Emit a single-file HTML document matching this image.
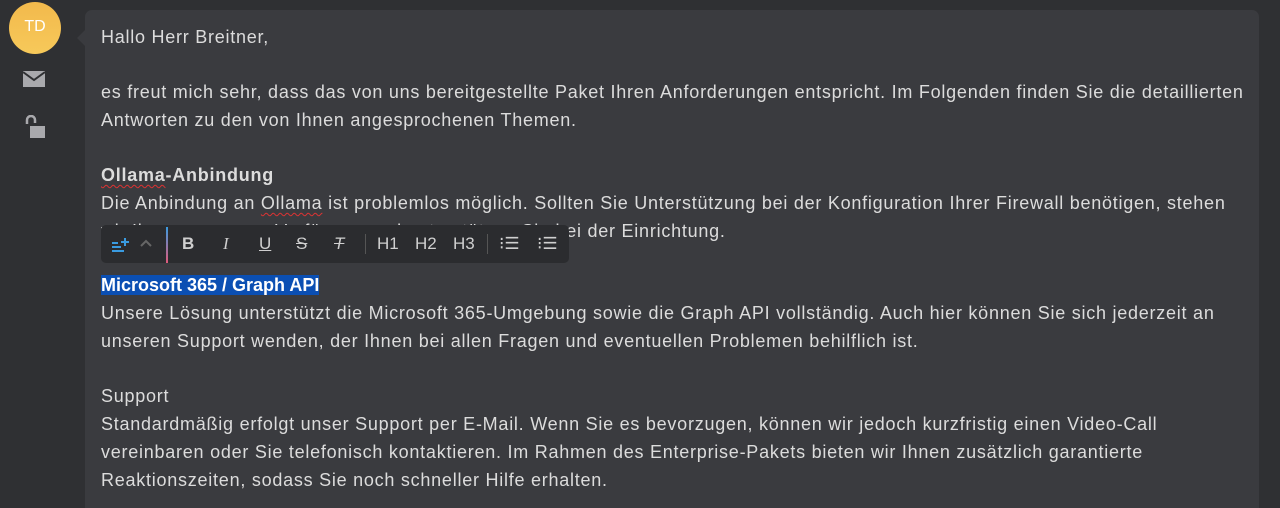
<!DOCTYPE html>
<html><head><meta charset="utf-8"><style>
html,body{margin:0;width:1280px;height:508px;overflow:hidden;}
body{background:#2f3033;position:relative;font-family:"Liberation Sans",sans-serif;}
.av{position:absolute;left:9px;top:2px;width:52px;height:52px;border-radius:50%;background:linear-gradient(#f2b94c,#f7c95a);color:#fff;font-size:16px;text-align:center;line-height:50px;}
.card{position:absolute;left:85px;top:10px;width:1174px;height:520px;background:#3a3b3f;border-radius:7px;}
.tri{position:absolute;left:77px;top:30px;width:0;height:0;border:8px solid transparent;border-right-color:#3a3b3f;border-left:0;}
.l{position:absolute;left:101px;color:#dcdcdc;font-size:18px;white-space:nowrap;line-height:28px;letter-spacing:0.75px}
b{font-weight:bold}
.sq{text-decoration:underline wavy #d33;text-decoration-thickness:1px;text-underline-offset:3px}
.tb{position:absolute;left:101px;top:225px;width:468px;height:38px;background:#2b2c2f;border-radius:5px;color:#cfcfcf;font-size:17px;}
.tb span{position:absolute;top:9px}
.sel{background:#0b4fb3;color:#fff}
</style></head><body>
<div class="av">TD</div>
<svg style="position:absolute;left:22px;top:70px" width="24" height="18"><rect x="1" y="1" width="22" height="16" fill="#a9a9ad"/><path d="M1 2 L12 10 L23 2" stroke="#2f3033" stroke-width="2" fill="none"/></svg>
<svg style="position:absolute;left:24px;top:115px" width="24" height="24"><path d="M3 9 V5 a4 4 0 0 1 8 0 V8" stroke="#a9a9ad" stroke-width="2.5" fill="none"/><rect x="6" y="11" width="15" height="12" fill="#a9a9ad"/></svg>
<div class="tri"></div>
<div class="card"></div>
<div class="l" style="top:23px">Hallo Herr Breitner,</div>
<div class="l" style="top:78px">es freut mich sehr, dass das von uns bereitgestellte Paket Ihren Anforderungen entspricht. Im Folgenden finden Sie die detaillierten</div>
<div class="l" style="top:106px">Antworten zu den von Ihnen angesprochenen Themen.</div>
<div class="l" style="top:161px"><b><span class="sq">Ollama</span>-Anbindung</b></div>
<div class="l" style="top:189px">Die Anbindung an <span class="sq">Ollama</span> ist problemlos möglich. Sollten Sie Unterstützung bei der Konfiguration Ihrer Firewall benötigen, stehen</div>
<div class="l" style="top:217px">wir Ihnen gerne zur Verfügung und unterstützen Sie bei der Einrichtung.</div>
<div class="tb">
<svg style="position:absolute;left:10px;top:9px" width="22" height="20"><path d="M1 17h12M1 13h9M1 9h6" stroke="#3a9be0" stroke-width="2"/><path d="M14 4v8M10 8h8" stroke="#3a9be0" stroke-width="2"/></svg>
<svg style="position:absolute;left:38px;top:12px" width="14" height="12"><path d="M2 9l5-5 5 5" stroke="#666" stroke-width="2" fill="none"/></svg>
<div style="position:absolute;left:65px;top:2px;width:2px;height:36px;background:linear-gradient(#3a9be0,#e05a7a)"></div>
<span style="left:81px;font-weight:bold">B</span><span style="left:122px;font-style:italic;font-family:'Liberation Serif',serif">I</span><span style="left:158px;text-decoration:underline">U</span><span style="left:195px;text-decoration:line-through">S</span><span style="left:233px;font-style:italic;text-decoration:line-through">T</span>
<div style="position:absolute;left:264px;top:9px;width:1px;height:20px;background:#555"></div>
<span style="left:276px">H1</span><span style="left:314px">H2</span><span style="left:352px">H3</span>
<div style="position:absolute;left:386px;top:9px;width:1px;height:20px;background:#555"></div>
<span style="left:398px">⁝☰</span><span style="left:436px">⁝☰</span>
</div>
<div class="l" style="top:271px"><b class="sel" style="letter-spacing:0px">Microsoft 365 / Graph API</b></div>
<div class="l" style="top:299px">Unsere Lösung unterstützt die Microsoft 365-Umgebung sowie die Graph API vollständig. Auch hier können Sie sich jederzeit an</div>
<div class="l" style="top:327px">unseren Support wenden, der Ihnen bei allen Fragen und eventuellen Problemen behilflich ist.</div>
<div class="l" style="top:382px">Support</div>
<div class="l" style="top:410px">Standardmäßig erfolgt unser Support per E-Mail. Wenn Sie es bevorzugen, können wir jedoch kurzfristig einen Video-Call</div>
<div class="l" style="top:438px">vereinbaren oder Sie telefonisch kontaktieren. Im Rahmen des Enterprise-Pakets bieten wir Ihnen zusätzlich garantierte</div>
<div class="l" style="top:466px">Reaktionszeiten, sodass Sie noch schneller Hilfe erhalten.</div>
</body></html>
